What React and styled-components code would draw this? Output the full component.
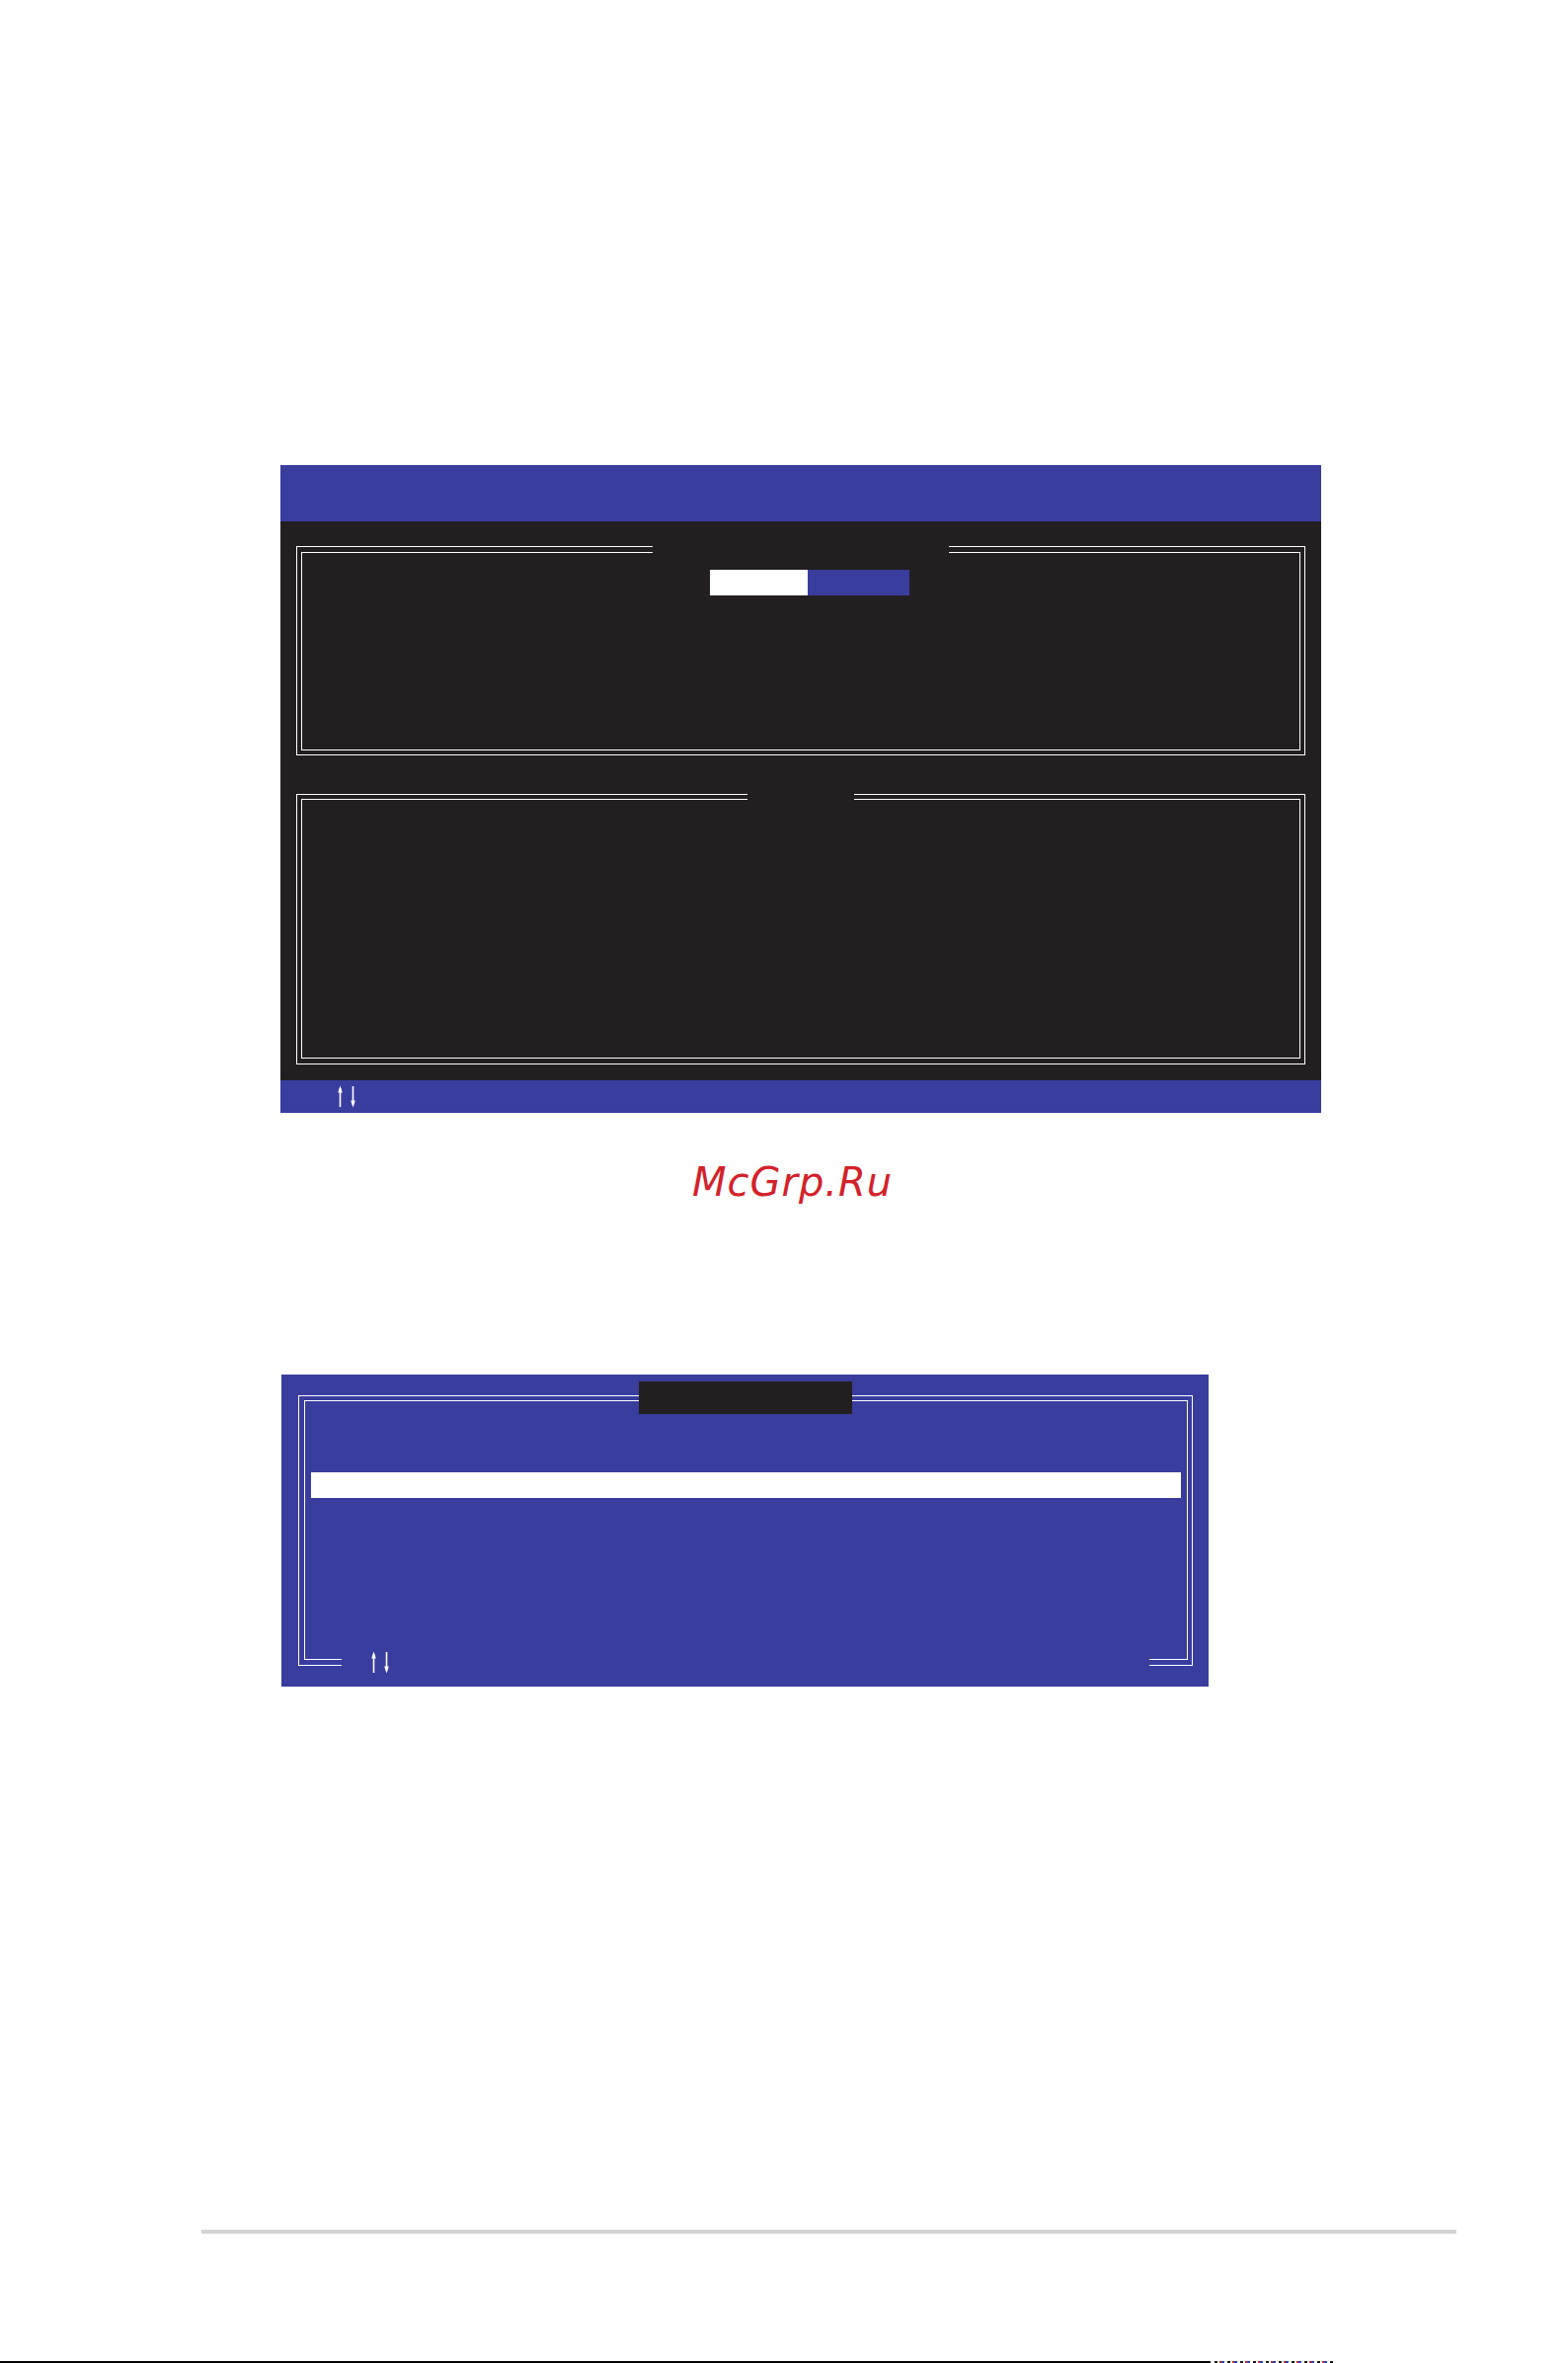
import React from 'react';
import styled, { createGlobalStyle } from 'styled-components';

const BLUE = '#393d9e';
const DARK = '#231f20';

const GlobalStyle = createGlobalStyle`
  html, body {
    margin: 0;
    padding: 0;
    background: #ffffff;
    font-family: "Liberation Sans", Arial, sans-serif;
  }
`;

const Page = styled.div`
  width: 1588px;
  height: 2393px;
  box-sizing: border-box;
  padding-top: 471px;
  display: flex;
  flex-direction: column;
  overflow: hidden;
  background: #ffffff;
`;

/* ---- setup screen (dark) ---- */

const Screen = styled.div`
  margin-left: 284px;
  width: 1054px;
  display: flex;
  flex-direction: column;
`;

const TitleBar = styled.div`
  height: 57px;
  background: ${BLUE};
`;

const ScreenBody = styled.div`
  height: 566px;
  box-sizing: border-box;
  background: ${DARK};
  padding: 25px 16px 16px 16px;
  display: flex;
  flex-direction: column;
  gap: 39px;
`;

const KeyBar = styled.div`
  height: 33px;
  box-sizing: border-box;
  background: ${BLUE};
  display: flex;
  align-items: center;
  padding-left: 57px;
`;

/* double-lined frame */
const Frame = styled.div`
  position: relative;
  height: ${p => p.$height}px;
  box-sizing: border-box;
  border: 1px solid #ffffff;
  padding: ${p => p.$pad};
  display: flex;
`;

const FrameInner = styled.div`
  flex: 1;
  border: 1px solid #ffffff;
  display: flex;
  flex-direction: column;
  padding: ${p => p.$pad || '0'};
`;

/* caption slot cut into the top border lines */
const Caption = styled.div`
  position: absolute;
  left: 50%;
  transform: translateX(-50%);
  top: ${p => p.$top}px;
  width: ${p => p.$width}px;
  height: ${p => p.$height}px;
  background: ${p => p.$bg};
`;

const TabRow = styled.div`
  display: flex;
  padding: 17px 0 0 413px;
`;

const Tab = styled.div`
  width: ${p => p.$width}px;
  height: 26px;
  background: ${p => (p.$active ? '#ffffff' : BLUE)};
`;

/* ---- watermark ---- */

const Mark = styled.div`
  margin-top: 47px;
  padding-left: 701px;
  height: 46px;
  line-height: 46px;
  font-family: "DejaVu Sans", "Liberation Sans", sans-serif;
  font-style: oblique;
  font-size: 40px;
  letter-spacing: 1px;
  color: #d3222a;
  white-space: nowrap;
`;

/* ---- popup dialog (blue) ---- */

const Dialog = styled.div`
  margin-top: 172px;
  margin-left: 285px;
  width: 939px;
  height: 316px;
  box-sizing: border-box;
  background: ${BLUE};
  padding: 21px 16px 21px 17px;
  display: flex;
  flex-direction: column;
`;

const SelectedRow = styled.div`
  height: 26px;
  background: #ffffff;
`;

const BottomLegend = styled.div`
  position: absolute;
  left: 43px;
  right: 43px;
  bottom: -8px;
  height: 22px;
  background: ${BLUE};
  display: flex;
  align-items: center;
  padding-left: 29px;
`;

/* ---- page furniture ---- */

const Rule = styled.div`
  margin-top: 550px;
  margin-left: 204px;
  width: 1271px;
  height: 4px;
  background: #d1d3d4;
`;

const EdgeRow = styled.div`
  margin-top: 129px;
  height: 2px;
  display: flex;
  align-items: stretch;
`;

const EdgeLine = styled.div`
  width: 1226px;
  background: #000000;
`;

const EdgeDots = styled.div`
  margin-left: 4px;
  width: 122px;
  background: repeating-linear-gradient(
    90deg,
    #1a1a1a 0 3px,
    #ffffff 3px 5px,
    #d22 5px 7px,
    #24c 7px 10px,
    #ffffff 10px 13px
  );
`;

const ArrowKeys = () => (
  <svg width="22" height="23" viewBox="0 0 22 23" aria-hidden="true">
    <g stroke="#ffffff" strokeWidth="1.6" fill="none">
      <line x1="3.5" y1="3" x2="3.5" y2="22" />
      <line x1="16.5" y1="1" x2="16.5" y2="20" />
    </g>
    <polygon points="1.2,7.5 3.5,0.5 5.8,7.5" fill="#ffffff" />
    <polygon points="14.2,15.5 16.5,22.5 18.8,15.5" fill="#ffffff" />
  </svg>
);

const App = () => (
  <>
    <GlobalStyle />
    <Page>
      <Screen>
        <TitleBar />
        <ScreenBody>
          <Frame $height={212} $pad="5px 4px 4px 4px">
            <Caption $top={-2} $width={300} $height={9} $bg={DARK} />
            <FrameInner>
              <TabRow>
                <Tab $active $width={99} />
                <Tab $width={103} />
              </TabRow>
            </FrameInner>
          </Frame>
          <Frame $height={274} $pad="4px 4px 5px 4px">
            <Caption $top={-2} $width={108} $height={9} $bg={DARK} />
            <FrameInner />
          </Frame>
        </ScreenBody>
        <KeyBar>
          <ArrowKeys />
        </KeyBar>
      </Screen>

      <Mark>McGrp.Ru</Mark>

      <Dialog>
        <Frame $height={274} $pad="4px 4px 5px 5px">
          <Caption $top={-15} $width={216} $height={33} $bg={DARK} />
          <FrameInner $pad="72px 6px 0 6px">
            <SelectedRow />
          </FrameInner>
          <BottomLegend>
            <ArrowKeys />
          </BottomLegend>
        </Frame>
      </Dialog>

      <Rule />

      <EdgeRow>
        <EdgeLine />
        <EdgeDots />
      </EdgeRow>
    </Page>
  </>
);

export default App;
